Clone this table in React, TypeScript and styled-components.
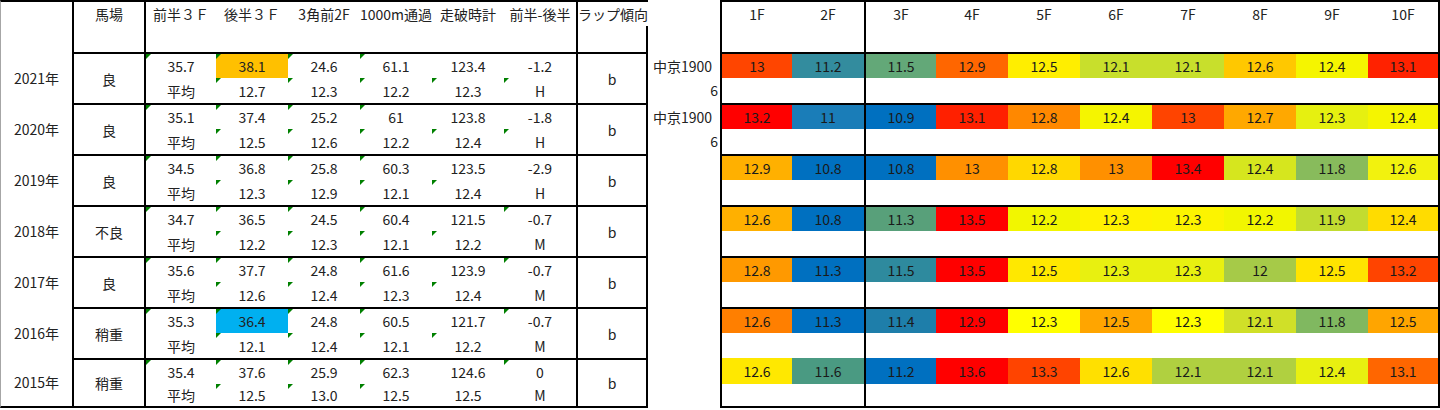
import React from 'react';
import styled, { createGlobalStyle, css } from 'styled-components';

const GlobalStyle = createGlobalStyle`
  *, *::before, *::after { box-sizing: border-box; }
  html, body { margin: 0; padding: 0; background: #ffffff; }
  body {
    font-family: "Noto Sans CJK JP", "Noto Sans", sans-serif;
    font-size: 14px;
    color: #222222;
  }
`;

const LINE = '2px solid #000000';

const Sheet = styled.div`
  display: flex;
  width: 1440px;
  height: 410px;
  overflow: hidden;
  background: #ffffff;
`;

/* ---------- left table ---------- */

const LeftBlock = styled.div`
  display: flex;
  flex-direction: column;
  width: 648px;
`;

const LeftHead = styled.div`
  display: grid;
  grid-template-columns: repeat(9, 72px);
  height: 52px;
`;

const HeadCell = styled.div<{ $edge: 'gray' | 'black' | 'none' }>`
  display: flex;
  flex-direction: column;
  border-top: ${LINE};
  border-left: ${(p) =>
    p.$edge === 'gray' ? '1px solid #a6a6a6' : p.$edge === 'black' ? LINE : 'none'};
`;

const HeadLabel = styled.div<{ $align?: 'left' | 'center' }>`
  height: 24px;
  line-height: 24px;
  white-space: nowrap;
  text-align: ${(p) => p.$align ?? 'center'};
`;

const HeadFoot = styled.div<{ $rule?: boolean }>`
  flex: 1;
  ${(p) => p.$rule && css`border-right: ${LINE};`}
`;

const DataRow = styled.div<{ $last?: boolean }>`
  display: grid;
  grid-template-columns: repeat(9, 72px);
  grid-template-rows: 26px ${(p) => (p.$last ? 24 : 25)}px;
`;

const SpanCell = styled.div<{ $kind: 'year' | 'ground' | 'lap'; $last?: boolean }>`
  grid-row: span 2;
  display: flex;
  align-items: center;
  justify-content: center;
  white-space: nowrap;
  ${(p) =>
    p.$kind === 'year'
      ? css`border-left: 1px solid #a6a6a6;`
      : css`
          border-left: ${LINE};
          border-top: ${LINE};
        `}
  ${(p) => p.$kind === 'lap' && css`border-right: ${LINE};`}
  ${(p) => p.$last && css`border-bottom: ${LINE};`}
`;

const ValueCell = styled.div<{
  $top?: boolean;
  $first?: boolean;
  $flag?: boolean;
  $fill?: string;
  $last?: boolean;
}>`
  position: relative;
  display: flex;
  align-items: center;
  justify-content: center;
  white-space: nowrap;
  background: ${(p) => p.$fill ?? 'transparent'};
  ${(p) => p.$top && css`border-top: ${LINE};`}
  ${(p) => p.$first && css`border-left: ${LINE};`}
  ${(p) => p.$last && css`border-bottom: ${LINE};`}
  ${(p) =>
    p.$flag &&
    css`
      &::before {
        content: '';
        position: absolute;
        top: 0;
        left: 0;
        width: 0;
        height: 0;
        border-top: 5px solid #008000;
        border-right: 5px solid transparent;
      }
    `}
`;

/* ---------- venue column ---------- */

const VenueColumn = styled.div`
  display: flex;
  flex-direction: column;
  width: 72px;
  padding-top: 52px;
`;

const VenueBlock = styled.div<{ $last?: boolean }>`
  display: grid;
  grid-template-rows: 26px ${(p) => (p.$last ? 24 : 25)}px;
`;

const VenueName = styled.div`
  padding: 2px 0 0 5px;
  line-height: 24px;
  white-space: nowrap;
`;

const VenueNum = styled.div`
  padding-right: 2px;
  line-height: 25px;
  text-align: right;
`;

/* ---------- right (lap) table ---------- */

const RightBlock = styled.div`
  display: flex;
  flex-direction: column;
  width: 720px;
`;

const LapGrid = styled.div<{ $top?: boolean; $last?: boolean; $head?: boolean }>`
  display: grid;
  grid-template-columns: 70px 72px 72px repeat(6, 72px) 70px;
  border-left: ${LINE};
  border-right: ${LINE};
  ${(p) => p.$top && css`border-top: ${LINE};`}
  ${(p) => p.$last && css`border-bottom: ${LINE};`}
  ${(p) =>
    p.$head
      ? css`
          height: 52px;
        `
      : css`
          grid-template-rows: ${p.$top ? 24 : 26}px ${p.$last ? 22 : 25}px;
        `}
`;

const LapHeadCell = styled.div<{ $divider?: boolean }>`
  height: 100%;
  ${(p) => p.$divider && css`border-left: ${LINE};`}
`;

const LapCell = styled.div<{ $fill?: string; $divider?: boolean }>`
  display: flex;
  align-items: center;
  justify-content: center;
  color: #1a1a1a;
  background: ${(p) => p.$fill ?? '#ffffff'};
  ${(p) => p.$divider && css`border-left: ${LINE};`}
`;

/* ---------- data ---------- */

type Pair = { t: string; b: string; ft?: boolean; fb?: boolean; fill?: string };

type Race = {
  year: string;
  ground: string;
  cols: Pair[];
  lap: string;
  venue?: [string, string];
  laps: string[];
  colors: string[];
};

const mk = (
  t: string,
  b: string,
  ft: boolean,
  fb: boolean,
  fill?: string
): Pair => ({ t, b, ft, fb, fill });

const races: Race[] = [
  {
    year: '2021年',
    ground: '良',
    cols: [
      mk('35.7', '平均', true, false),
      mk('38.1', '12.7', true, true, '#ffc000'),
      mk('24.6', '12.3', true, true),
      mk('61.1', '12.2', true, true),
      mk('123.4', '12.3', false, true),
      mk('-1.2', 'H', false, true),
    ],
    lap: 'b',
    venue: ['中京1900', '6'],
    laps: ['13', '11.2', '11.5', '12.9', '12.5', '12.1', '12.1', '12.6', '12.4', '13.1'],
    colors: ['#ff4500', '#338c9e', '#63a878', '#ff6600', '#ffee00', '#c8df2c', '#c8df2c', '#ffc800', '#f5f500', '#ff2200'],
  },
  {
    year: '2020年',
    ground: '良',
    cols: [
      mk('35.1', '平均', true, false),
      mk('37.4', '12.5', true, true),
      mk('25.2', '12.6', true, true),
      mk('61', '12.2', true, true),
      mk('123.8', '12.4', false, true),
      mk('-1.8', 'H', false, true),
    ],
    lap: 'b',
    venue: ['中京1900', '6'],
    laps: ['13.2', '11', '10.9', '13.1', '12.8', '12.4', '13', '12.7', '12.3', '12.4'],
    colors: ['#ff0000', '#1a7db8', '#0070c0', '#ff2000', '#ff8800', '#f5f500', '#ff4400', '#ffa800', '#e6f010', '#f5f500'],
  },
  {
    year: '2019年',
    ground: '良',
    cols: [
      mk('34.5', '平均', true, false),
      mk('36.8', '12.3', true, true),
      mk('25.8', '12.9', true, true),
      mk('60.3', '12.1', true, true),
      mk('123.5', '12.4', false, true),
      mk('-2.9', 'H', false, false),
    ],
    lap: 'b',
    laps: ['12.9', '10.8', '10.8', '13', '12.8', '13', '13.4', '12.4', '11.8', '12.6'],
    colors: ['#ffb000', '#0070c0', '#0070c0', '#ff9000', '#ffd800', '#ff9000', '#ff0000', '#d6e61e', '#88bb5c', '#f2f20e'],
  },
  {
    year: '2018年',
    ground: '不良',
    cols: [
      mk('34.7', '平均', true, false),
      mk('36.5', '12.2', true, true),
      mk('24.5', '12.3', true, true),
      mk('60.4', '12.1', true, true),
      mk('121.5', '12.2', false, true),
      mk('-0.7', 'M', true, false),
    ],
    lap: 'b',
    laps: ['12.6', '10.8', '11.3', '13.5', '12.2', '12.3', '12.3', '12.2', '11.9', '12.4'],
    colors: ['#ffb000', '#0070c0', '#58a07a', '#ff0000', '#f2f600', '#fff200', '#fcf400', '#f2f600', '#c2dc30', '#ffdc00'],
  },
  {
    year: '2017年',
    ground: '良',
    cols: [
      mk('35.6', '平均', true, false),
      mk('37.7', '12.6', true, true),
      mk('24.8', '12.4', true, true),
      mk('61.6', '12.3', true, true),
      mk('123.9', '12.4', false, true),
      mk('-0.7', 'M', true, false),
    ],
    lap: 'b',
    laps: ['12.8', '11.3', '11.5', '13.5', '12.5', '12.3', '12.3', '12', '12.5', '13.2'],
    colors: ['#ff9900', '#0070c0', '#2e8a9e', '#ff0000', '#ffe800', '#e8f010', '#e8f010', '#a6ca48', '#ffe400', '#ff4400'],
  },
  {
    year: '2016年',
    ground: '稍重',
    cols: [
      mk('35.3', '平均', true, false),
      mk('36.4', '12.1', true, true, '#00b0f0'),
      mk('24.8', '12.4', true, true),
      mk('60.5', '12.1', true, true),
      mk('121.7', '12.2', false, true),
      mk('-0.7', 'M', true, false),
    ],
    lap: 'b',
    laps: ['12.6', '11.3', '11.4', '12.9', '12.3', '12.5', '12.3', '12.1', '11.8', '12.5'],
    colors: ['#ff7f00', '#0070c0', '#1e7eaa', '#ff0000', '#ffff00', '#ffa500', '#ffff00', '#d0e028', '#80b860', '#ffa500'],
  },
  {
    year: '2015年',
    ground: '稍重',
    cols: [
      mk('35.4', '平均', true, false),
      mk('37.6', '12.5', true, true),
      mk('25.9', '13.0', true, true),
      mk('62.3', '12.5', true, true),
      mk('124.6', '12.5', false, false),
      mk('0', 'M', true, false),
    ],
    lap: 'b',
    laps: ['12.6', '11.6', '11.2', '13.6', '13.3', '12.6', '12.1', '12.1', '12.4', '13.1'],
    colors: ['#ffe800', '#4a9a82', '#0070c0', '#ff0000', '#ff4400', '#ffe000', '#b0d040', '#b0d040', '#e8f010', '#ff6600'],
  },
];

const headers = ['馬場', '前半３Ｆ', '後半３Ｆ', '3角前2F', '1000m通過', '走破時計', '前半-後半'];
const lapHeaders = ['1F', '2F', '3F', '4F', '5F', '6F', '7F', '8F', '9F', '10F'];

export default function App() {
  return (
    <>
      <GlobalStyle />
      <Sheet>
        <LeftBlock>
          <LeftHead>
            <HeadCell $edge="gray" />
            {headers.map((h, i) => (
              <HeadCell key={h} $edge={i <= 1 ? 'black' : 'none'}>
                <HeadLabel>{h}</HeadLabel>
              </HeadCell>
            ))}
            <HeadCell $edge="black">
              <HeadLabel $align="left">ラップ傾向</HeadLabel>
              <HeadFoot $rule />
            </HeadCell>
          </LeftHead>
          {races.map((r, ri) => {
            const last = ri === races.length - 1;
            return (
              <DataRow key={r.year} $last={last}>
                <SpanCell $kind="year" $last={last}>
                  {r.year}
                </SpanCell>
                <SpanCell $kind="ground" $last={last}>
                  {r.ground}
                </SpanCell>
                {r.cols.map((c, ci) => (
                  <ValueCell key={`t${ci}`} $top $first={ci === 0} $flag={c.ft} $fill={c.fill}>
                    {c.t}
                  </ValueCell>
                ))}
                <SpanCell $kind="lap" $last={last}>
                  {r.lap}
                </SpanCell>
                {r.cols.map((c, ci) => (
                  <ValueCell key={`b${ci}`} $first={ci === 0} $flag={c.fb} $last={last}>
                    {c.b}
                  </ValueCell>
                ))}
              </DataRow>
            );
          })}
        </LeftBlock>

        <VenueColumn>
          {races.map((r, ri) => (
            <VenueBlock key={r.year} $last={ri === races.length - 1}>
              <VenueName>{r.venue?.[0] ?? ''}</VenueName>
              <VenueNum>{r.venue?.[1] ?? ''}</VenueNum>
            </VenueBlock>
          ))}
        </VenueColumn>

        <RightBlock>
          <LapGrid $head $top>
            {lapHeaders.map((h, i) => (
              <LapHeadCell key={h} $divider={i === 2}>
                <HeadLabel>{h}</HeadLabel>
              </LapHeadCell>
            ))}
          </LapGrid>
          {races.map((r, ri) => {
            const last = ri === races.length - 1;
            return (
              <LapGrid key={r.year} $top={!last} $last={last}>
                {r.laps.map((v, i) => (
                  <LapCell key={`v${i}`} $fill={r.colors[i]} $divider={i === 2}>
                    {v}
                  </LapCell>
                ))}
                {r.laps.map((_, i) => (
                  <LapCell key={`e${i}`} $divider={i === 2} />
                ))}
              </LapGrid>
            );
          })}
        </RightBlock>
      </Sheet>
    </>
  );
}
